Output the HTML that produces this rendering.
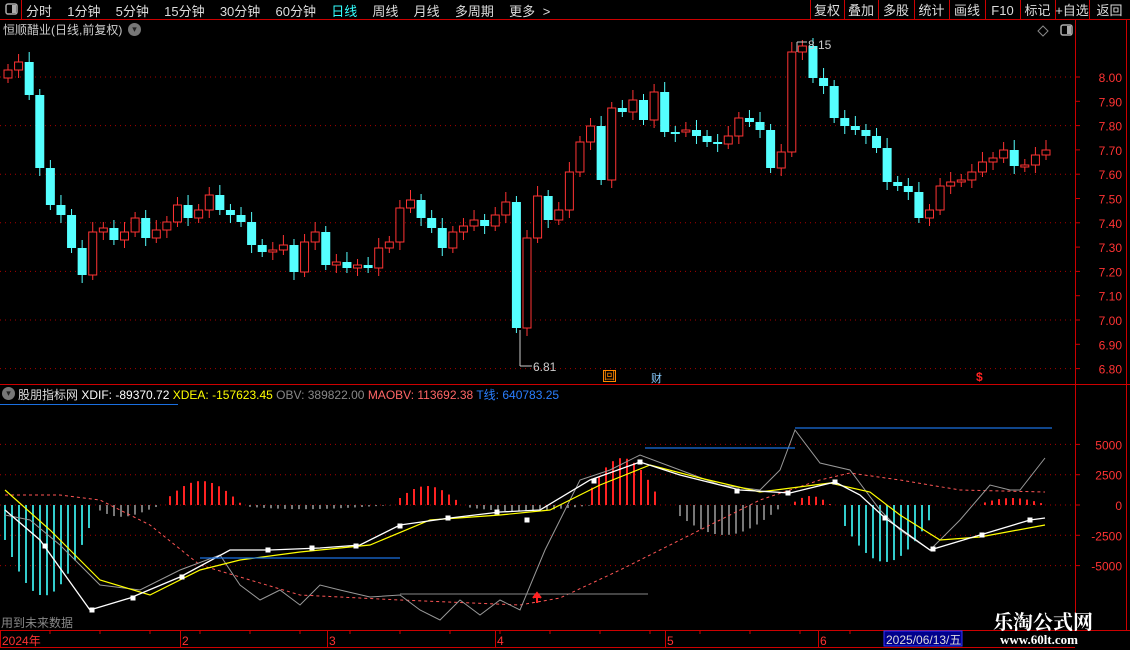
<!DOCTYPE html><html><head><meta charset="utf-8"><style>
body{margin:0;background:#000;width:1130px;height:650px;overflow:hidden;font-family:"Liberation Sans","Noto Sans CJK SC",sans-serif;position:relative}
.t{position:absolute;white-space:nowrap}
</style></head><body>
<svg width="1130" height="650" style="position:absolute;left:0;top:0" id="s" xmlns="http://www.w3.org/2000/svg"></svg>
<div class="t" style="left:26px;top:1px;font-size:13px;color:#ddd;word-spacing:4px">分时 &nbsp;1分钟 &nbsp;5分钟 &nbsp;15分钟 &nbsp;30分钟 &nbsp;60分钟 &nbsp;<span style="color:#3ff">日线</span> &nbsp;周线 &nbsp;月线 &nbsp;多周期 &nbsp;更多 &gt;</div>
<div class="t" style="left:3px;top:21px;font-size:12px;color:#ccc">恒顺醋业(日线,前复权)</div>
<div class="t" style="left:128px;top:23px;width:13px;height:13px;border-radius:50%;background:#777;color:#222;font-size:9px;text-align:center;line-height:13px">▾</div>
<div class="t" style="left:2px;top:387px;width:13px;height:13px;border-radius:50%;background:#777;color:#222;font-size:9px;text-align:center;line-height:13px">▾</div>
<div class="t" style="left:18px;top:386px;font-size:12px;color:#ddd">股朋指标网 <span style="color:#fff">XDIF: -89370.72</span> <span style="color:#ff0">XDEA: -157623.45</span> <span style="color:#888">OBV: 389822.00</span> <span style="color:#f66">MAOBV: 113692.38</span> <span style="color:#2a7fff">T线: 640783.25</span></div>
<div class="t" style="left:1px;top:614px;font-size:12px;color:#888">用到未来数据</div>
<div class="t" style="left:993px;top:606px;font-size:20px;font-weight:bold;color:#fff;font-family:'Noto Serif CJK SC',serif">乐淘公式网</div>
<div class="t" style="left:1000px;top:632px;font-size:13px;font-weight:bold;color:#fff;font-family:'Liberation Serif',serif">www.60lt.com</div>
<div class="t" style="left:603px;top:370px;font-size:11px;color:#f80;border:1px solid #f80;line-height:10px">回</div>
<div class="t" style="left:651px;top:370px;font-size:11px;color:#8cf">财</div>
<div class="t" style="left:976px;top:370px;font-size:12px;color:#f22;font-weight:bold">$</div>
<div class="t" style="left:808px;top:38px;font-size:12px;color:#ccc">8.15</div>
<div class="t" style="left:533px;top:360px;font-size:12px;color:#ccc">6.81</div>
<script>
const s=document.getElementById('s');let h='';
const L=(x1,y1,x2,y2,c,w,d)=>h+=`<line x1="${x1}" y1="${y1}" x2="${x2}" y2="${y2}" stroke="${c}" stroke-width="${w||1}" ${d?'stroke-dasharray="'+d+'"':''}/>`;
const T=(x,y,t,c,sz,a)=>h+=`<text x="${x}" y="${y}" fill="${c}" font-size="${sz||12}" font-family="Liberation Sans,Noto Sans CJK SC,sans-serif" ${a?'text-anchor="'+a+'"':''}>${t}</text>`;
L(0,19.5,1130,19.5,'#c00');L(21.5,0,21.5,19,'#c00');
h+=`<rect x="6" y="4" width="11" height="10" rx="2" fill="none" stroke="#aaa" stroke-width="1.5"/><rect x="12" y="5" width="4" height="8" fill="#aaa"/>`;
const btn=[['复权'],['叠加'],['多股'],['统计'],['画线'],['F10'],['标记'],['+自选'],['返回']];
let bx=[810,844,878,914,949,985,1020,1055,1089,1130];
bx.forEach(x=>L(x+.5,0,x+.5,19,'#c00'));
btn.forEach((b,i)=>T((bx[i]+bx[i+1])/2,15,b[0],'#ddd',13,'middle'));
L(1075.5,20,1075.5,630,'#c00');L(1126.5,20,1126.5,630,'#c00');
L(0,384.5,1130,384.5,'#c00');L(0,630.5,1130,630.5,'#c00');L(0,647.5,1075,647.5,'#c00',1);
h+=`<path d="M1043 26l5 5-5 5-5-5z" fill="none" stroke="#888"/><rect x="1061" y="25" width="11" height="10" rx="2" fill="none" stroke="#aaa" stroke-width="1.5"/><rect x="1067" y="26" width="4" height="8" fill="#aaa"/>`;
L(0,404.5,178,404.5,'#1a6fe0');
const py=p=>77+(8-p)*243;
for(let i=0;i<=12;i++){let p=8-i*0.1,y=py(p);if(i%2==0)L(0,y,1075,y,'#a00',1,'1,4');L(1075,y,1080,y,'#c00');T(1122,y+5,p.toFixed(2),'#f33',12,'end');}
const cy=[70,62,95,168,205,215,248,275,232,228,240,232,218,238,230,222,205,218,210,195,210,215,222,245,252,250,245,272,242,232,265,262,268,265,268,248,242,208,200,218,228,248,232,226,220,226,215,202,328,238,196,220,210,172,142,126,180,108,112,100,120,92,132,132,130,136,142,144,136,118,122,130,168,152,52,46,78,86,118,126,130,136,148,182,186,192,218,210,186,182,180,172,162,158,150,166,165,155,150];
let prev=cy[0]+8;
const dx=(1046-8)/(cy.length-1);
cy.forEach((c,i)=>{let x=8+i*dx,o=prev,up=c<o,top=Math.min(o,c),bh=Math.max(2,Math.abs(o-c));
let col=up?'#ff3333':'#55ffff';L(x,top-6-(i%3)*2,x,top+bh+5+(i%2)*3,col);
if(up)h+=`<rect x="${x-4}" y="${top}" width="8" height="${bh}" fill="#000" stroke="${col}"/>`;else h+=`<rect x="${x-4.5}" y="${top}" width="9" height="${bh}" fill="${col}"/>`;prev=c;});
L(520,330,520,366,'#ccc');L(520,366,532,366,'#ccc');L(797,42,797,52,'#ccc');L(797,42,807,42,'#ccc');
const iy=v=>505-v*0.01212;
[5000,2500,0,-2500,-5000].forEach(v=>{let y=iy(v);L(0,y,1075,y,'#a00',1,'1,4');L(1075,y,1080,y,'#c00');T(1122,y+5,v,'#f33',12,'end');});
function B(x1,x2,ys,ye,c){for(let x=x1;x<=x2;x+=7){let t=(x-x1)/Math.max(1,x2-x1);let y=505+((ys+(ye-ys)*t)-505)*Math.sin(Math.PI*Math.min(1,t*0.85+0.12));L(x,505,x,y,c,2);}}
B(5,95,600,590,'#3cc');B(100,160,520,512,'#777');B(170,240,481,481,'#f22');B(250,390,510,508,'#777');B(400,460,486,486,'#f22');B(470,590,512,510,'#777');B(592,660,458,458,'#f22');B(680,780,535,535,'#777');B(795,830,496,496,'#f22');B(845,935,562,562,'#3cc');B(985,1045,498,498,'#f22');
const P=(pts,c,w,d)=>h+=`<polyline points="${pts}" fill="none" stroke="${c}" stroke-width="${w||1}" ${d?'stroke-dasharray="'+d+'"':''}/>`;
P('5,495 60,495 100,500 150,525 200,565 300,595 400,600 520,605 560,598 620,570 700,530 760,500 820,480 850,473 900,480 960,490 1045,492','#f55',1,'3,3');
P('5,515 30,520 60,545 100,585 140,590 180,570 220,555 240,585 260,600 280,590 300,605 320,585 340,590 370,597 400,595 420,610 440,620 460,600 480,615 500,600 520,610 545,550 565,510 580,480 610,470 640,455 680,470 720,485 760,490 780,470 795,430 820,463 850,470 880,510 900,530 930,550 960,520 990,485 1010,490 1020,490 1045,458','#999',1);
P('5,490 50,530 100,580 150,595 200,570 240,560 300,552 370,545 430,520 500,515 550,510 600,485 650,465 700,478 760,492 830,483 870,492 900,515 940,540 980,537 1045,525','#ff0',1.2);
P('5,510 40,540 90,610 130,598 180,577 230,550 270,550 320,548 360,545 400,525 450,518 500,512 540,510 590,480 640,462 680,475 740,490 790,493 835,482 860,495 885,518 930,550 980,535 1030,520 1045,518','#fff',1.3);
[[45,546],[92,610],[133,598],[182,577],[268,550],[312,548],[356,546],[400,526],[448,518],[497,512],[527,520],[594,481],[640,462],[737,491],[788,493],[835,482],[885,518],[933,549],[982,535],[1030,520]].forEach(p=>h+=`<rect x="${p[0]-2.5}" y="${p[1]-2.5}" width="5" height="5" fill="#fff"/>`);
L(200,558,400,558,'#1a6fe0',1.3);L(645,448,795,448,'#1a6fe0',1.3);L(795,428,1052,428,'#1a6fe0',1.3);L(400,594,648,594,'#888');
h+=`<path d="M537 603v-8M533 598l4-5 4 5" stroke="#f22" stroke-width="2" fill="#f22"/>`;
[[2,'2024年'],[182,'2'],[329,'3'],[497,'4'],[667,'5'],[820,'6']].forEach(d=>{L(d[0]+.5-2,631,d[0]+.5-2,647,'#c00');T(d[0],645,d[1],'#f33',12);});
for(let x=50;x<880;x+=50)L(x,631,x,634,'#c00');
h+=`<rect x="884" y="631" width="78" height="15" fill="#00008b" stroke="#33f"/>`;T(886,644,'2025/06/13/五','#ddd',12);
s.innerHTML=h;
</script>
</body></html>
